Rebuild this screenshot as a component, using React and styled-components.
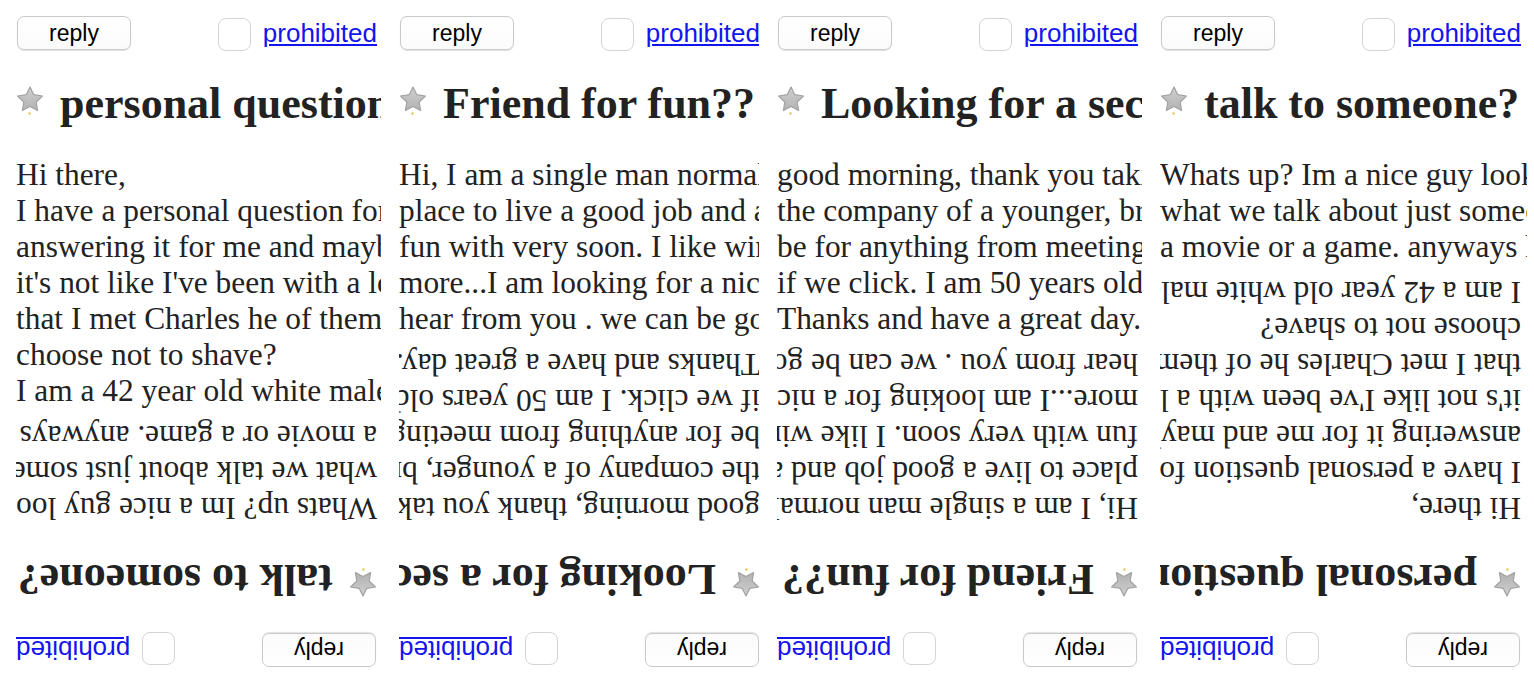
import styled, { createGlobalStyle } from 'styled-components';

const posts = [
  {
    title: 'personal question',
    lines: [
      'Hi there,',
      'I have a personal question for you girls and would appreciate',
      'answering it for me and maybe we could talk',
      "it's not like I've been with a lot of women but",
      'that I met Charles he of them all said they',
      'choose not to shave?',
      'I am a 42 year old white male',
    ],
  },
  {
    title: 'Friend for fun??',
    lines: [
      'Hi, I am a single man normal guy with a nice',
      'place to live a good job and a car looking for someone',
      'fun with very soon. I like wine, dinners, movies and',
      'more...I am looking for a nice lady to spend time',
      'hear from you . we can be good friends first',
    ],
  },
  {
    title: 'Looking for a second chance',
    lines: [
      'good morning, thank you taking the time to read',
      'the company of a younger, bright woman. This could',
      'be for anything from meeting for coffee to more',
      'if we click. I am 50 years old and in good shape',
      'Thanks and have a great day.',
    ],
  },
  {
    title: 'talk to someone?',
    lines: [
      'Whats up? Im a nice guy looking for someone to chat with',
      'what we talk about just someone to hang out with',
      'a movie or a game. anyways hit me up',
    ],
  },
];

const GlobalStyle = createGlobalStyle`
  html, body {
    margin: 0;
    height: 100%;
    overflow: hidden;
    background: #fff;
  }
`;

const Page = styled.div`
  display: grid;
  grid-template-columns: 383px 378px 383px 1fr;
  height: 100vh;
`;

const Column = styled.div`
  padding-left: 16px;
  min-width: 0;
`;

const Clip = styled.div`
  width: calc(100% - 2px);
  max-width: 367px;
  height: 100%;
  overflow: hidden;
  display: flex;
  flex-direction: column;
  justify-content: space-between;
`;

const Post = styled.div`
  width: 361px;
  flex-shrink: 0;
  padding-top: 16px;
  transform: ${(p) => (p.$flipped ? 'rotate(180deg)' : 'none')};
`;

const Actions = styled.div`
  display: flex;
  align-items: center;
  height: 34px;
`;

const ReplyButton = styled.button`
  width: 114px;
  height: 34px;
  margin-left: 1px;
  padding: 0;
  background: linear-gradient(#fff, #fbfbfb);
  border: 1px solid #c9c9c9;
  border-radius: 7px;
  box-shadow: 0 1px 1px rgba(0, 0, 0, 0.12);
  font-family: 'Liberation Sans', Arial, sans-serif;
  font-size: 23px;
  color: #000;
`;

const Check = styled.input`
  appearance: none;
  margin: 2px 12px 0 auto;
  width: 33px;
  height: 33px;
  border: 1.5px solid #d4d4d4;
  border-radius: 8px;
  background: #fff;
`;

const Prohibited = styled.a`
  font-family: 'Liberation Sans', Arial, sans-serif;
  font-size: 26px;
  color: #1414f0;
  text-decoration: underline;
`;

const Title = styled.h2`
  display: flex;
  align-items: center;
  margin: 29px 0;
  height: 49px;
  font-family: 'Liberation Serif', 'Times New Roman', serif;
  font-size: 44px;
  font-weight: bold;
  line-height: 49px;
  color: #222;
  white-space: nowrap;
`;

const StarIcon = styled.svg`
  flex-shrink: 0;
  width: 28px;
  height: 32px;
  margin: 0 16px 6px 0;
`;

const Body = styled.div`
  font-family: 'Liberation Serif', 'Times New Roman', serif;
  font-size: 31.4px;
  line-height: 36px;
  color: #222;
  white-space: nowrap;
`;

const Star = () => (
  <StarIcon viewBox="0 0 28 32">
    <defs>
      <linearGradient id="starFill" x1="0" y1="0" x2="0" y2="1">
        <stop offset="0" stopColor="#cfcfcf" />
        <stop offset="1" stopColor="#b2b2b2" />
      </linearGradient>
    </defs>
    <polygon
      points="14,2 17.8,9.7 26.4,11 20.2,17 21.6,25.5 14,21.5 6.4,25.5 7.8,17 1.6,11 10.2,9.7"
      fill="url(#starFill)"
      stroke="#a2a2a2"
      strokeWidth="1.2"
      strokeLinejoin="round"
    />
    <circle cx="13.5" cy="28.5" r="1.2" fill="#e8c64a" />
  </StarIcon>
);

const PostBlock = ({ post, flipped }) => (
  <Post $flipped={flipped}>
    <Actions>
      <ReplyButton>reply</ReplyButton>
      <Check type="checkbox" />
      <Prohibited href="#">prohibited</Prohibited>
    </Actions>
    <Title>
      <Star />
      {post.title}
    </Title>
    <Body>
      {post.lines.map((line, i) => (
        <div key={i}>{line}</div>
      ))}
    </Body>
  </Post>
);

export default function App() {
  return (
    <>
      <GlobalStyle />
      <Page>
        {posts.map((post, i) => (
          <Column key={i}>
            <Clip>
              <PostBlock post={post} />
              <PostBlock post={posts[posts.length - 1 - i]} flipped />
            </Clip>
          </Column>
        ))}
      </Page>
    </>
  );
}
